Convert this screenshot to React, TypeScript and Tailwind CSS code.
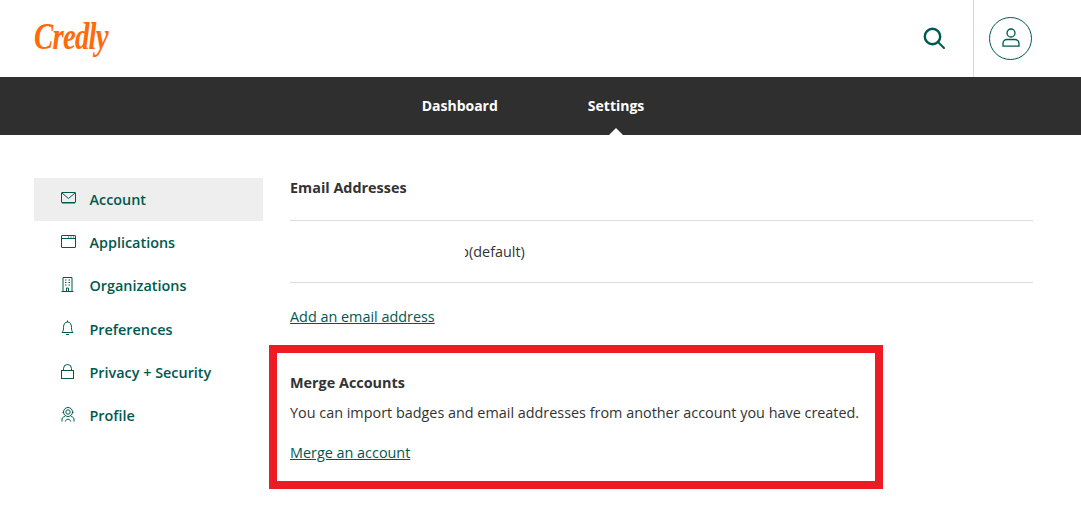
const GREEN = "#00594f";

function MailIcon() {
  return (
    <svg viewBox="0 0 15 12" className="h-3 w-[15px]" fill="none" stroke="currentColor" strokeWidth="1">
      <rect x="0.5" y="0.5" width="14" height="10" rx="0.5" />
      <path d="M1 1l6.5 5.5L14 1" />
      <path d="M1 11.5h13" opacity="0.5" />
    </svg>
  );
}

function WindowIcon() {
  return (
    <svg viewBox="0 0 15 13" className="h-[13px] w-[15px]" fill="none" stroke="currentColor" strokeWidth="1">
      <rect x="0.5" y="0.5" width="14" height="12" rx="0.5" />
      <path d="M0.5 3.5h14" />
      <path d="M7 2h1M9.5 2h1M12 2h1" />
    </svg>
  );
}

function BuildingIcon() {
  return (
    <svg viewBox="0 0 13 15" className="h-[15px] w-[13px]" fill="none" stroke="currentColor" strokeWidth="1">
      <path d="M2 14.5V0.5h9v14M0.5 14.5h12" />
      <path d="M4 3h1.5M7.5 3H9M4 5.5h1.5M7.5 5.5H9M4 8h1.5M7.5 8H9M5.5 14.5v-3.5h2v3.5" />
    </svg>
  );
}

function BellIcon() {
  return (
    <svg viewBox="0 0 13 16" className="h-4 w-[13px]" fill="none" stroke="currentColor" strokeWidth="1">
      <path d="M1 12.5c1.2-1.3 1.5-2.6 1.5-5C2.5 4 4 2 6.5 2s4 2 4 5.5c0 2.4.3 3.7 1.5 5z" />
      <path d="M6.5 0.5V2M5 14.5h3" />
    </svg>
  );
}

function LockIcon() {
  return (
    <svg viewBox="0 0 13 15" className="h-[15px] w-[13px]" fill="none" stroke="currentColor" strokeWidth="1">
      <rect x="0.5" y="6.5" width="12" height="8" />
      <path d="M2.5 6.5V4.5a4 4 0 0 1 8 0v2" />
    </svg>
  );
}

function BadgeIcon() {
  return (
    <svg viewBox="0 0 14 15" className="h-[15px] w-[14px]" fill="none" stroke="currentColor" strokeWidth="1">
      <circle cx="7" cy="5" r="4.5" />
      <circle cx="7" cy="5" r="2.2" />
      <path d="M1.5 5.5h1.2M11.3 5.5h1.2" />
      <path d="M1 14.5v-2.5c0-1.5 2-2.5 3-2.5M13 14.5v-2.5c0-1.5-2-2.5-3-2.5M4.5 14.5c0-3 5-3 5 0" />
    </svg>
  );
}

const NAV_ITEMS = [
  { label: "Account", icon: <MailIcon />, active: true },
  { label: "Applications", icon: <WindowIcon /> },
  { label: "Organizations", icon: <BuildingIcon /> },
  { label: "Preferences", icon: <BellIcon /> },
  { label: "Privacy + Security", icon: <LockIcon /> },
  { label: "Profile", icon: <BadgeIcon /> },
];

export default function App() {
  return (
    <div className="h-[521px] overflow-hidden bg-white font-['Open_Sans',sans-serif] text-[14.4px] text-[#333]">
      <header className="flex h-[77px] items-stretch justify-between pl-[34px] pr-[49px]">
        <a className="-mt-[3px] flex origin-left scale-x-[0.78] items-center font-['Liberation_Serif',serif] text-[37px] font-bold italic tracking-[-1px] text-[#ff6b0a]">
          Credly
        </a>
        <div className="flex items-stretch">
          <button type="button" aria-label="Search" className="-mt-[1px] flex w-[78px] items-center justify-center pr-[1px]" style={{ color: GREEN }}>
            <svg viewBox="0 0 22 22" className="h-[22px] w-[22px]" fill="none" stroke="currentColor" strokeWidth="2.4">
              <circle cx="9.5" cy="9.5" r="7.7" />
              <path d="M15 15l6 6" strokeLinecap="round" strokeWidth="2" />
            </svg>
          </button>
          <div className="flex items-center border-l border-[#d8d8d8] pb-[1px] pl-[15px]">
            <button type="button" aria-label="Account menu" className="flex h-[43px] w-[43px] items-center justify-center rounded-full border border-[#00594f] text-[#00594f]">
              <svg viewBox="0 0 18 20" className="h-5 w-[18px]" fill="none" stroke="currentColor" strokeWidth="1.3">
                <circle cx="9" cy="5" r="4" />
                <path d="M1 18.2v-2.7c0-2.5 2-4 4-4h8c2 0 4 1.5 4 4v2.7z" />
              </svg>
            </button>
          </div>
        </div>
      </header>

      <nav className="flex h-[58px] justify-center gap-[90px] bg-[#2f2f2f] pr-[15px] text-sm font-bold text-white">
        <a className="flex items-center">Dashboard</a>
        <a className="relative flex items-center">
          Settings
          <span className="absolute bottom-0 left-1/2 h-0 w-0 -translate-x-1/2 border-x-[7px] border-b-[7px] border-x-transparent border-b-white" />
        </a>
      </nav>

      <main className="flex pl-[34px] pr-[48px] pt-[43px]">
        <aside className="w-[229px] shrink-0">
          {NAV_ITEMS.map((item) => (
            <a
              key={item.label}
              className={`flex h-[43.3px] items-center font-semibold text-[#00594f] ${item.active ? "bg-[#eeeeee]" : ""}`}
            >
              <span className="flex w-[55.5px] pb-[3px] pl-[27px]">{item.icon}</span>
              {item.label}
            </a>
          ))}
        </aside>

        <section className="ml-[27px] flex-1">
          <h2 className="h-[42px] font-bold leading-[20px]">Email Addresses</h2>
          <div className="flex h-[63px] items-center border-y border-[#dcdcdc] pl-[175px]">
            <span className="inline-flex w-[4px] justify-end overflow-hidden">o</span>
            (default)
          </div>
          <a className="mt-[24px] block leading-[20px] text-[#00594f] underline">Add an email address</a>

          <div className="mt-[18px] -ml-[21px] flex h-[144px] w-[614px] flex-col border-8 border-[#ed1c24] pl-[13px] pt-[19px]">
            <h2 className="font-bold leading-[22px]">Merge Accounts</h2>
            <p className="mt-[9px] leading-[20px]">You can import badges and email addresses from another account you have created.</p>
            <a className="mt-[20px] leading-[20px] text-[#00594f] underline">Merge an account</a>
          </div>
        </section>
      </main>
    </div>
  );
}
